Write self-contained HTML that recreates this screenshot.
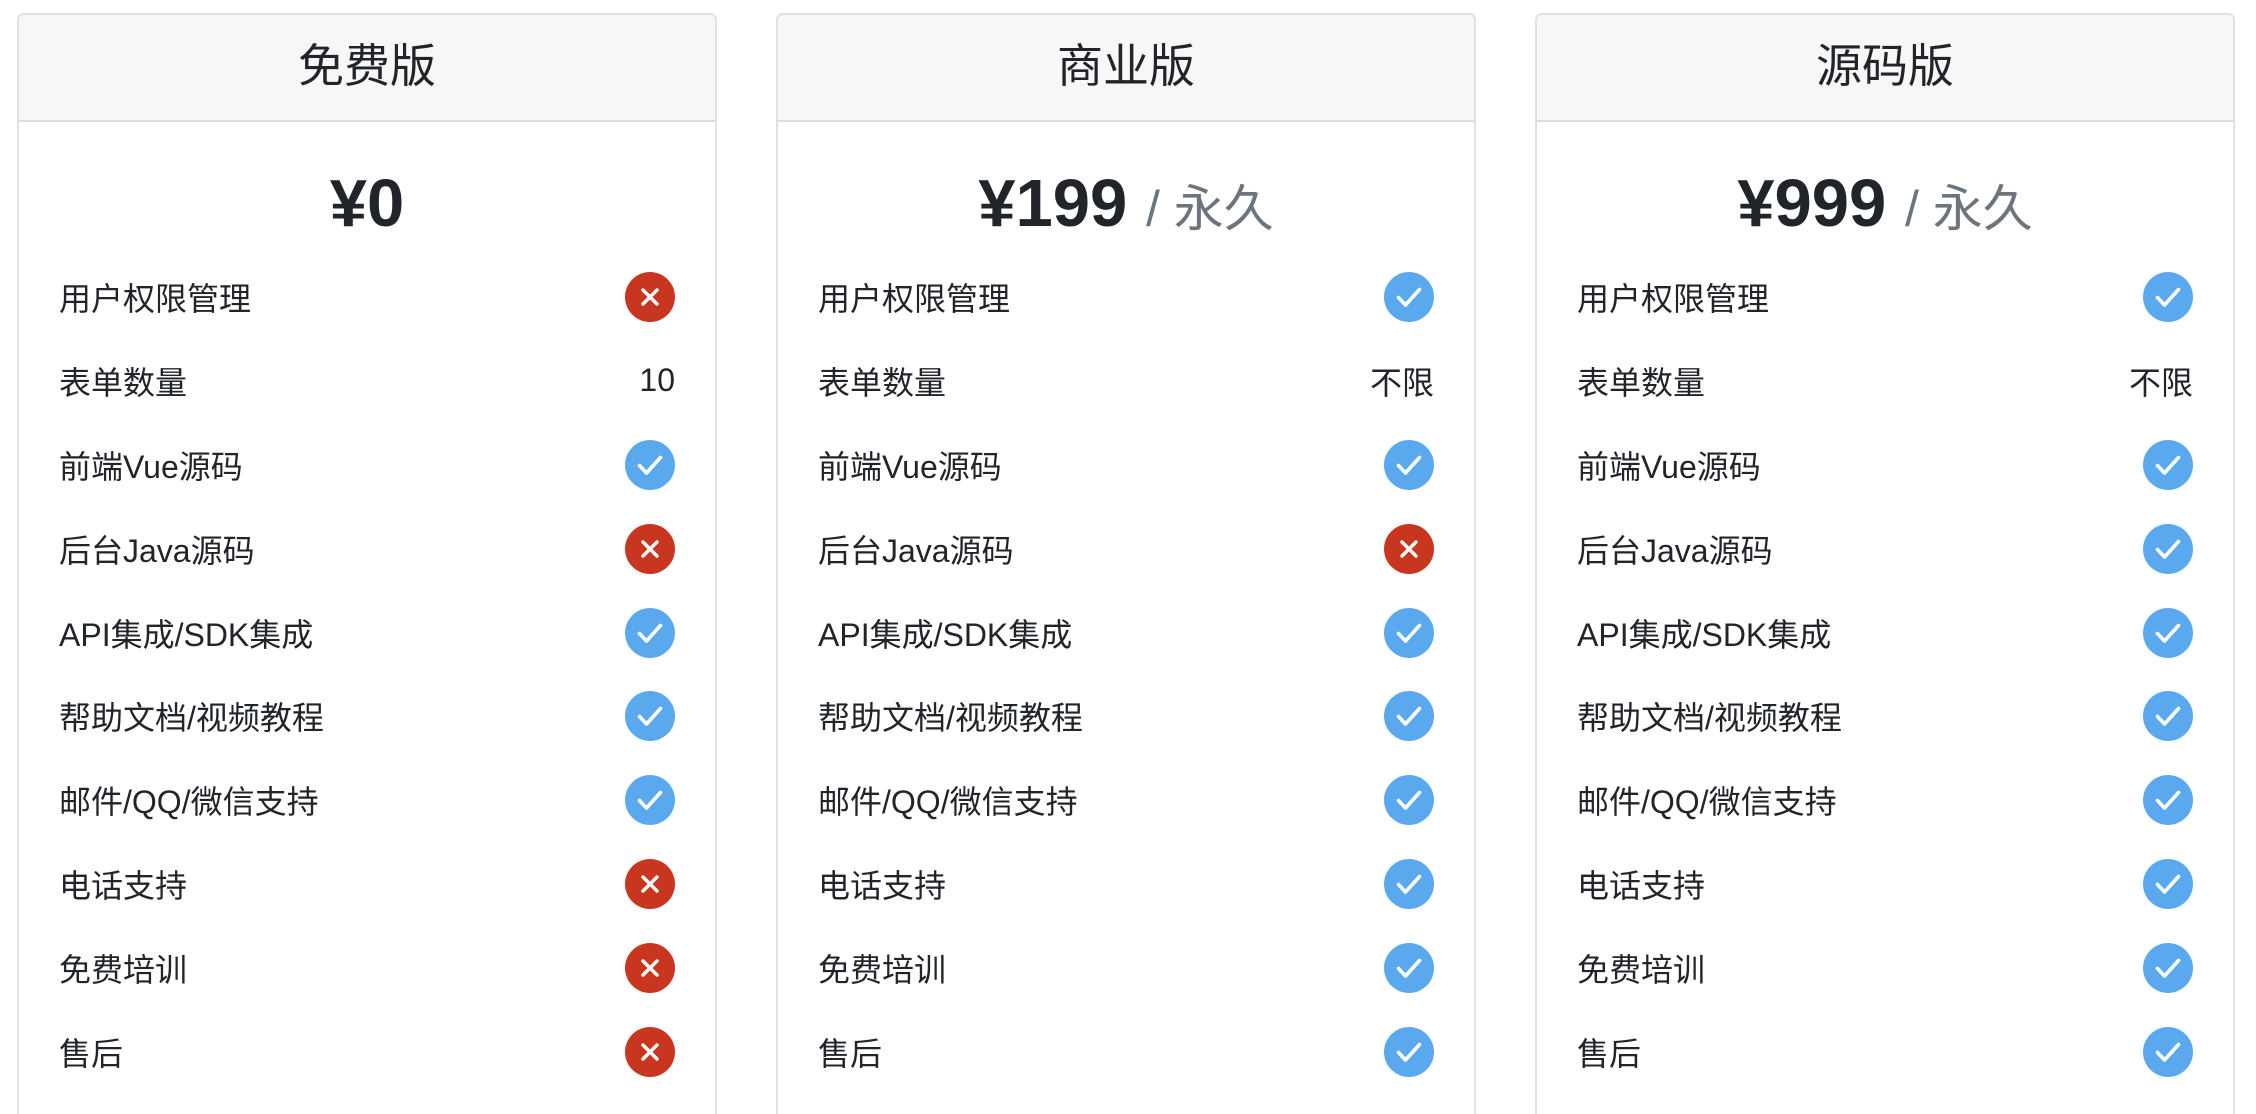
<!DOCTYPE html>
<html><head><meta charset="utf-8"><style>
html,body{margin:0;width:2256px;height:1114px;overflow:hidden}
body{background:#fff;font-family:"Liberation Sans","Noto Sans CJK SC",sans-serif;color:#212529;position:relative}
.card{position:absolute;top:13px;width:700px;height:1101px;border:2px solid #e1e1e1;border-bottom:none;border-radius:7px 7px 0 0;box-sizing:border-box;background:#fff;overflow:hidden}
.hd{height:105px;background:#f7f7f7;border-bottom:2px solid #dcdcdc;text-align:center;line-height:103px;font-size:46px}
.price{height:133px;text-align:center;line-height:163px;font-size:67px;font-weight:bold;white-space:nowrap}
.price small{font-size:50px;font-weight:normal;color:#6c757d}
.row{height:83.9px;display:flex;align-items:center;justify-content:space-between;padding:0 40px 0 40px;font-size:32px}
svg{display:block}
</style></head><body>
<svg width="0" height="0" style="position:absolute"><defs>
<symbol id="ok" viewBox="0 0 50 50"><circle cx="25" cy="25" r="25" fill="#5aa9ee"/><path d="M14.5 25.5l7 7.5 14-15.5" fill="none" stroke="#fff" stroke-width="3.6" stroke-linecap="round" stroke-linejoin="round"/></symbol>
<symbol id="no" viewBox="0 0 50 50"><circle cx="25" cy="25" r="25" fill="#c9361f"/><path d="M18 18l14 14M32 18L18 32" fill="none" stroke="#fff" stroke-width="3.4" stroke-linecap="round"/></symbol>
</defs></svg>

<div class="card" style="left:17px">
<div class="hd">免费版</div>
<div class="price">¥0</div>
<div class="row">用户权限管理<svg width="50" height="50"><use href="#no"/></svg></div>
<div class="row">表单数量<span>10</span></div>
<div class="row">前端Vue源码<svg width="50" height="50"><use href="#ok"/></svg></div>
<div class="row">后台Java源码<svg width="50" height="50"><use href="#no"/></svg></div>
<div class="row">API集成/SDK集成<svg width="50" height="50"><use href="#ok"/></svg></div>
<div class="row">帮助文档/视频教程<svg width="50" height="50"><use href="#ok"/></svg></div>
<div class="row">邮件/QQ/微信支持<svg width="50" height="50"><use href="#ok"/></svg></div>
<div class="row">电话支持<svg width="50" height="50"><use href="#no"/></svg></div>
<div class="row">免费培训<svg width="50" height="50"><use href="#no"/></svg></div>
<div class="row">售后<svg width="50" height="50"><use href="#no"/></svg></div>
</div>

<div class="card" style="left:776px">
<div class="hd">商业版</div>
<div class="price">¥199 <small>/ 永久</small></div>
<div class="row">用户权限管理<svg width="50" height="50"><use href="#ok"/></svg></div>
<div class="row">表单数量<span>不限</span></div>
<div class="row">前端Vue源码<svg width="50" height="50"><use href="#ok"/></svg></div>
<div class="row">后台Java源码<svg width="50" height="50"><use href="#no"/></svg></div>
<div class="row">API集成/SDK集成<svg width="50" height="50"><use href="#ok"/></svg></div>
<div class="row">帮助文档/视频教程<svg width="50" height="50"><use href="#ok"/></svg></div>
<div class="row">邮件/QQ/微信支持<svg width="50" height="50"><use href="#ok"/></svg></div>
<div class="row">电话支持<svg width="50" height="50"><use href="#ok"/></svg></div>
<div class="row">免费培训<svg width="50" height="50"><use href="#ok"/></svg></div>
<div class="row">售后<svg width="50" height="50"><use href="#ok"/></svg></div>
</div>

<div class="card" style="left:1535px">
<div class="hd">源码版</div>
<div class="price">¥999 <small>/ 永久</small></div>
<div class="row">用户权限管理<svg width="50" height="50"><use href="#ok"/></svg></div>
<div class="row">表单数量<span>不限</span></div>
<div class="row">前端Vue源码<svg width="50" height="50"><use href="#ok"/></svg></div>
<div class="row">后台Java源码<svg width="50" height="50"><use href="#ok"/></svg></div>
<div class="row">API集成/SDK集成<svg width="50" height="50"><use href="#ok"/></svg></div>
<div class="row">帮助文档/视频教程<svg width="50" height="50"><use href="#ok"/></svg></div>
<div class="row">邮件/QQ/微信支持<svg width="50" height="50"><use href="#ok"/></svg></div>
<div class="row">电话支持<svg width="50" height="50"><use href="#ok"/></svg></div>
<div class="row">免费培训<svg width="50" height="50"><use href="#ok"/></svg></div>
<div class="row">售后<svg width="50" height="50"><use href="#ok"/></svg></div>
</div>
</body></html>
